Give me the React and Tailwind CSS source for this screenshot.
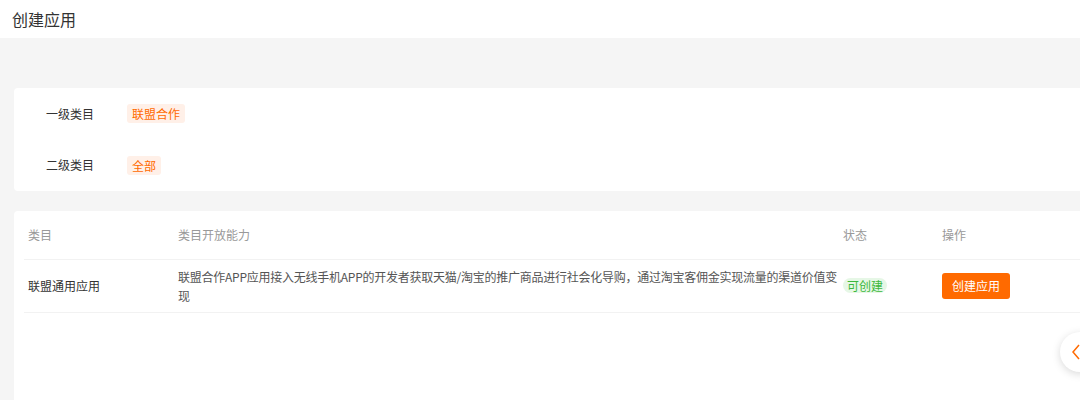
import React from 'react';

const FONT = { fontFamily: '"Noto Sans CJK SC", "Noto Sans", sans-serif' };

const Tag = ({ children }) => (
  <span className="inline-block h-[19px] px-[5px] rounded-[3px] bg-[#fff0e8] text-[#ff6a00] text-[12px] leading-[19px]">
    {children}
  </span>
);

const App = () => {
  return (
    <div className="relative w-[1080px] h-[400px] overflow-hidden bg-[#f5f5f5]" style={FONT}>
      {/* Header */}
      <div className="h-[38px] bg-white flex items-center px-3">
        <h1 className="text-[16px] text-[#333]">创建应用</h1>
      </div>

      <div className="w-[1200px] pl-[14px] pt-[50px]">
        {/* Category filter */}
        <div className="bg-white rounded-[4px] pl-8">
          <div className="h-[51px] flex items-center">
            <span className="w-[81px] text-[12px] text-[#333]">一级类目</span>
            <Tag>联盟合作</Tag>
          </div>
          <div className="h-[52px] flex items-center">
            <span className="w-[81px] text-[12px] text-[#333]">二级类目</span>
            <Tag>全部</Tag>
          </div>
        </div>

        {/* Table */}
        <div className="mt-5 bg-white rounded-[4px] px-[10px] h-[200px]">
          <div className="flex h-[49px] items-center border-b border-[#f2f2f2] text-[12px] text-[#999]">
            <div className="w-[150px] px-1">类目</div>
            <div className="w-[665px] px-1">类目开放能力</div>
            <div className="w-[99px] px-1">状态</div>
            <div className="px-1">操作</div>
          </div>
          <div className="flex h-[53px] items-center border-b border-[#f2f2f2] text-[12px] text-[#333]">
            <div className="w-[150px] px-1">联盟通用应用</div>
            <div className="w-[665px] pl-1 pr-0">
              <div className="w-[665px] leading-[19px] tracking-[-0.25px] text-[#555]">
                联盟合作APP应用接入无线手机APP的开发者获取天猫/淘宝的推广商品进行社会化导购，通过淘宝客佣金实现流量的渠道价值变现
              </div>
            </div>
            <div className="w-[99px] px-1">
              <span className="inline-block h-[15px] px-1 rounded-[8px] bg-[#e6f7e6] text-[#3cb83c] leading-[15px]">
                可创建
              </span>
            </div>
            <div className="px-1">
              <button className="h-[26px] px-[10px] rounded-[3px] bg-[#ff6a00] text-white text-[12px]">
                创建应用
              </button>
            </div>
          </div>
        </div>
      </div>

      {/* Floating collapse button */}
      <div className="absolute left-[1060px] top-[332px] w-10 h-10 rounded-full bg-white shadow-[0_2px_8px_rgba(0,0,0,0.15)] flex items-center pl-[11px]">
        <svg width="10" height="16" viewBox="0 0 10 16" fill="none">
          <path d="M8 1L2 8l6 7" stroke="#ff6a00" strokeWidth="1.5" />
        </svg>
      </div>
    </div>
  );
};

export default App;
